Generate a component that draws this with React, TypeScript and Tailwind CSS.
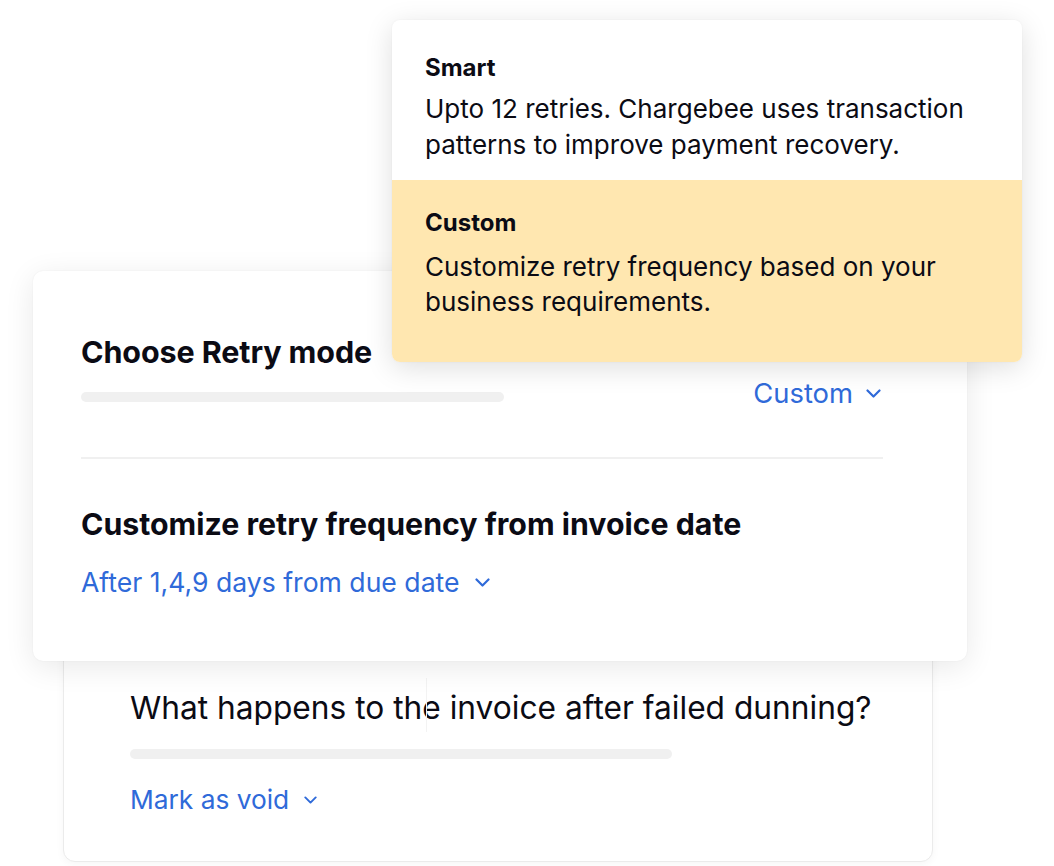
import React from "react";

function Chevron({ className = "" }: { className?: string }) {
  return (
    <svg
      className={className}
      width="15"
      height="9"
      viewBox="0 0 15 9"
      fill="none"
      stroke="currentColor"
      strokeWidth="2.2"
      strokeLinecap="round"
      strokeLinejoin="round"
    >
      <path d="M1.5 1.5 L7.5 7.5 L13.5 1.5" />
    </svg>
  );
}

export default function App() {
  return (
    <div className="relative w-[1054px] h-[866px] overflow-hidden bg-white font-['Inter',sans-serif] text-[#0b0b14]">
      {/* Back card */}
      <div className="absolute left-[63px] top-[600px] w-[870px] h-[262px] rounded-[12px] border border-[#ebebeb] bg-white shadow-[0_2px_8px_rgba(0,0,0,0.04)] flex flex-col pl-[66px] pt-[87px]">
        <div className="text-[31.7px] leading-[40px] font-normal whitespace-nowrap">
          What happens to the invoice after failed dunning?
        </div>
        <div className="mt-[21px] h-[10px] w-[542px] rounded-full bg-[#f0f0f0]" />
        <div className="mt-[23px] flex items-center gap-[15px] text-[#2f6ad9]">
          <span className="text-[26.3px] leading-[36px] whitespace-nowrap">Mark as void</span>
          <Chevron className="w-[13px] h-[8px]" />
        </div>
        <div className="absolute left-[362px] top-[77px] w-px h-[54px] bg-[#f3f3f3]" />
      </div>

      {/* Middle card */}
      <div className="absolute left-[33px] top-[271px] w-[934px] h-[390px] rounded-[10px] bg-white shadow-[0_6px_30px_rgba(0,0,0,0.09),0_0_2px_rgba(0,0,0,0.06)] flex flex-col pl-[48px] pr-[86px] pt-[61px]">
        <div className="text-[30.5px] leading-[40px] font-bold tracking-[-0.1px] whitespace-nowrap">
          Choose Retry mode
        </div>
        <div className="mt-[3px] flex items-center justify-between h-[36px]">
          <div className="mt-[8px] h-[10px] w-[423px] rounded-full bg-[#f0f0f0]" />
          <div className="flex items-center gap-[13px] text-[#2f6ad9]">
            <span className="text-[27.4px] leading-[36px] whitespace-nowrap">Custom</span>
            <Chevron />
          </div>
        </div>
        <div className="mt-[46px] h-[2px] w-[802px] bg-[#f0f0f0]" />
        <div className="mt-[45px] text-[30.3px] leading-[40px] font-bold whitespace-nowrap">
          Customize retry frequency from invoice date
        </div>
        <div className="mt-[20px] flex items-center gap-[15px] text-[#2f6ad9]">
          <span className="text-[26.6px] leading-[36px] whitespace-nowrap">After 1,4,9 days from due date</span>
          <Chevron />
        </div>
      </div>

      {/* Dropdown popup */}
      <div className="absolute left-[392px] top-[20px] w-[630px] h-[342px] rounded-[8px] overflow-hidden bg-white shadow-[0_6px_28px_rgba(0,0,0,0.13),0_0_2px_rgba(0,0,0,0.05)] flex flex-col">
        <div className="pl-[33px] pt-[33px] pb-[17px] h-[160px]">
          <div className="text-[24px] leading-[30px] font-bold">Smart</div>
          <div className="mt-[8px] text-[26px] leading-[36px]">
            Upto 12 retries. Chargebee uses transaction
            <br />
            patterns to improve payment recovery.
          </div>
        </div>
        <div className="flex-1 bg-[#ffe7b0] pl-[33px] pt-[28px]">
          <div className="text-[24px] leading-[30px] font-bold">Custom</div>
          <div className="mt-[11px] text-[26px] leading-[35px]">
            Customize retry frequency based on your
            <br />
            business requirements.
          </div>
        </div>
      </div>
    </div>
  );
}
